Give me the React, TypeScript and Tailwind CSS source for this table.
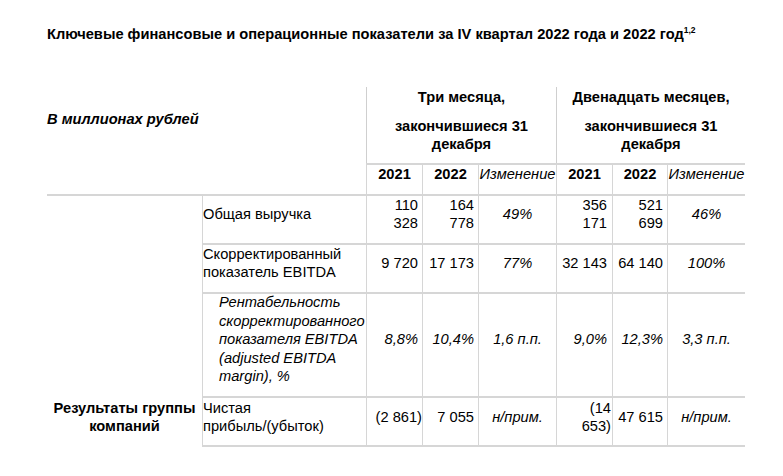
import React from "react";

const H = "border-t-2 border-[#d6d6d6]";
const V = "border-l border-[#cfcfcf]";

function Num({ children, pr = "pr-[4px]", italic = false }: { children: React.ReactNode; pr?: string; italic?: boolean }) {
  return (
    <div className={`${H} ${V} flex items-center justify-end pb-[11px] text-right ${pr} ${italic ? "italic" : ""}`}>
      <div>{children}</div>
    </div>
  );
}

function Chg({ children }: { children: React.ReactNode }) {
  return (
    <div className={`${H} ${V} flex items-center justify-center pb-[11px] italic whitespace-nowrap`}>
      <div>{children}</div>
    </div>
  );
}

export default function App() {
  return (
    <div
      className="w-[783px] h-[476px] bg-white text-black text-[14.67px] leading-[18.4px] overflow-hidden"
      style={{ fontFamily: '"Liberation Sans", Arial, sans-serif' }}
    >
      <div className="pl-[47px] pt-[25px] font-bold leading-[18px] whitespace-nowrap">
        Ключевые финансовые и операционные показатели за IV квартал 2022 года и 2022 год
        <span className="text-[8.5px] leading-none align-[6px]">1,2</span>
      </div>

      <div className="ml-[47px] mt-[44px] grid grid-cols-[155px_164px_56px_56px_78px_56px_55px_78px] grid-rows-[76px_31px_49px_49px_104px_51px]">
        {/* header row 1 */}
        <div className="col-span-2 row-span-2 pt-[23px] font-bold italic whitespace-nowrap">В миллионах рублей</div>
        <div className={`col-span-3 ${V} flex flex-col items-center font-bold leading-[18px] pt-[1px] whitespace-nowrap`}>
          <div>Три месяца,</div>
          <div className="mt-[11px] text-center">
            закончившиеся 31
            <br />
            декабря
          </div>
        </div>
        <div className={`col-span-3 ${V} flex flex-col items-center font-bold leading-[18px] pt-[1px] whitespace-nowrap`}>
          <div>Двенадцать месяцев,</div>
          <div className="mt-[11px] text-center">
            закончившиеся 31
            <br />
            декабря
          </div>
        </div>

        {/* header row 2 */}
        <div className={`${H} ${V} text-center font-bold leading-[18px]`}>2021</div>
        <div className={`${H} ${V} text-center font-bold leading-[18px]`}>2022</div>
        <div className={`${H} ${V} flex justify-center italic leading-[18px] whitespace-nowrap`}>Изменение</div>
        <div className={`${H} ${V} text-center font-bold leading-[18px]`}>2021</div>
        <div className={`${H} ${V} text-center font-bold leading-[18px]`}>2022</div>
        <div className={`${H} ${V} flex justify-center italic leading-[18px] whitespace-nowrap`}>Изменение</div>

        {/* body: first column block */}
        <div className={`row-span-3 ${H}`}></div>

        {/* row: revenue */}
        <div className={`${H} ${V} flex items-center pb-[11px] whitespace-nowrap`}>Общая выручка</div>
        <Num>
          110
          <br />
          328
        </Num>
        <Num>
          164
          <br />
          778
        </Num>
        <Chg>49%</Chg>
        <Num pr="pr-[5px]">
          356
          <br />
          171
        </Num>
        <Num>
          521
          <br />
          699
        </Num>
        <Chg>46%</Chg>

        {/* row: EBITDA */}
        <div className={`${H} ${V} flex items-center pb-[11px] whitespace-nowrap`}>
          <div>
            Скорректированный
            <br />
            показатель EBITDA
          </div>
        </div>
        <Num>9 720</Num>
        <Num>17 173</Num>
        <Chg>77%</Chg>
        <Num pr="pr-[5px]">32 143</Num>
        <Num>64 140</Num>
        <Chg>100%</Chg>

        {/* row: margin */}
        <div className={`${H} ${V} flex items-center pb-[11px] pl-[16px] italic whitespace-nowrap`}>
          <div>
            Рентабельность
            <br />
            скорректированного
            <br />
            показателя EBITDA
            <br />
            (adjusted EBITDA
            <br />
            margin), %
          </div>
        </div>
        <Num italic>8,8%</Num>
        <Num italic>10,4%</Num>
        <Chg>1,6 п.п.</Chg>
        <Num italic pr="pr-[5px]">9,0%</Num>
        <Num italic>12,3%</Num>
        <Chg>3,3 п.п.</Chg>

        {/* row: net profit */}
        <div className="flex items-center justify-center pb-[11px] pt-[2px] text-center font-bold whitespace-nowrap">
          <div>
            Результаты группы
            <br />
            компаний
          </div>
        </div>
        <div className={`${H} border-b-2 ${V} flex items-center pb-[9px] whitespace-nowrap`}>
          <div>
            Чистая
            <br />
            прибыль/(убыток)
          </div>
        </div>
        <div className={`${H} border-b-2 ${V} flex items-center justify-end pb-[9px] pr-0 whitespace-nowrap`}>(2 861)</div>
        <div className={`${H} border-b-2 ${V} flex items-center justify-end pb-[9px] pr-[4px] whitespace-nowrap`}>7 055</div>
        <div className={`${H} border-b-2 ${V} flex items-center justify-center pb-[9px] italic whitespace-nowrap`}>н/прим.</div>
        <div className={`${H} border-b-2 ${V} flex items-center justify-end pb-[9px] pr-[1px] text-right`}>
          <div>
            (14
            <br />
            653)
          </div>
        </div>
        <div className={`${H} border-b-2 ${V} flex items-center justify-end pb-[9px] pr-[4px] whitespace-nowrap`}>47 615</div>
        <div className={`${H} border-b-2 ${V} flex items-center justify-center pb-[9px] italic whitespace-nowrap`}>н/прим.</div>
      </div>
    </div>
  );
}
